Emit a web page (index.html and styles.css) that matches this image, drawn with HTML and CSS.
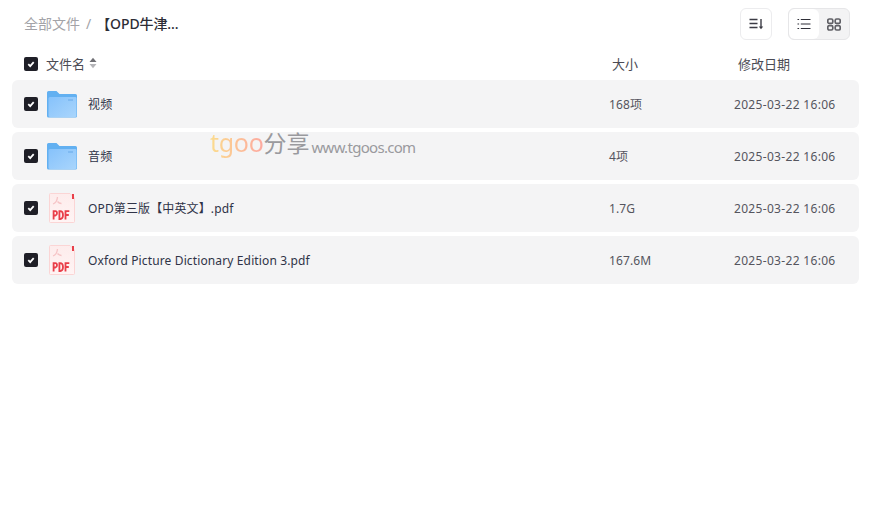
FILE: index.html
```html
<!DOCTYPE html>
<html lang="zh-CN">
<head>
<meta charset="utf-8">
<title>全部文件</title>
<link rel="stylesheet" href="styles.css">
</head>
<body>
<svg class="defs" width="0" height="0">
  <defs>
    <linearGradient id="folderFront" x1="0" y1="0" x2="1" y2="1"><stop offset="0" stop-color="#86c2fb"/><stop offset="1" stop-color="#a9d5fc"/></linearGradient>
    <linearGradient id="pdfPaper" x1="0" y1="0" x2="0" y2="1"><stop offset="0" stop-color="#fdecec"/><stop offset="1" stop-color="#fff4f4"/></linearGradient>
    <symbol id="folder" viewBox="0 0 30 28"><path d="M0 2.500Q0 1 1.500 1H9.500L12.500 4H28.500Q30 4 30 5.500V26Q30 27.500 28.500 27.500H1.500Q0 27.500 0 26z" fill="#62b0f1"/><path d="M1.500 8.500Q1.500 7 3 7H28.500Q29.500 7 29.500 8.500V25.500Q29.500 27 28 27H3Q1.500 27 1.500 25.500z" fill="url(#folderFront)"/><rect x="21" y="9" width="5" height="2" fill="#7fbaf2"/></symbol>
    <symbol id="pdf" viewBox="0 0 30 30"><path d="M3.500 .5H23L27.500 5V28.500Q27.500 29.500 26.500 29.500H3.500Q2.500 29.500 2.500 28.500V1.500Q2.500 .5 3.500 .5z" fill="url(#pdfPaper)" stroke="#fbd5d5"/><rect x="25" y="1" width="2" height="5" fill="#e8404a"/><path d="M6 11Q10 9.500 10.500 4M10.500 8.500Q12 10.500 14.500 10.500" stroke="#f6c4c6" stroke-width="1.300" fill="none"/><g fill="none" stroke="#e93e49" stroke-width="1.800"><path d="M6.600 26.500V18.200H8.300Q10 18.200 10 20.200T8.300 22.500H6.600"/><path d="M12.400 26V18.200H13.200Q16 18.200 16 22.100T13.200 26z"/><path d="M18.500 26.500V18.200H22.300M18.500 22H21.800"/></g></symbol>
    <symbol id="tick" viewBox="0 0 10 10"><path d="M2.300 5.200l1.900 1.900L7.700 3.200" stroke="#fff" stroke-width="1.800" fill="none"/></symbol>
  </defs>
</svg>
<div class="page">
  <header class="topbar">
    <nav class="crumbs">
      <span class="crumb-root">全部文件</span>
      <span class="crumb-sep">/</span>
      <span class="crumb-current">【OPD牛津...</span>
    </nav>
    <div class="tools">
      <button class="tool sort-btn">
        <svg width="16" height="16" viewBox="0 0 16 16"><path d="M1.500 3.500h8M1.500 7.500h8M1.500 11.500h8" stroke="#3b3b44" stroke-width="1.300" fill="none"/><path d="M13 3v8.500" stroke="#3b3b44" stroke-width="1.400" fill="none"/><path d="M10.800 10.600h4.400L13 13.200z" fill="#3b3b44"/></svg>
      </button>
      <div class="view-toggle">
        <button class="view active">
          <svg width="14" height="12" viewBox="0 0 14 12"><path d="M0.500 1.500h1.600M0.500 6h1.600M0.500 10.500h1.600M3.800 1.500h9.700M3.800 6h9.700M3.800 10.500h9.700" stroke="#2f2f38" stroke-width="1.200" fill="none"/></svg>
        </button>
        <button class="view">
          <svg width="14" height="13" viewBox="0 0 14 13"><g fill="none" stroke="#606066" stroke-width="1.700"><rect x="0.800" y="1" width="5" height="4.400" rx="1.400"/><rect x="8.200" y="1" width="5" height="4.400" rx="1.400"/><rect x="0.800" y="7.600" width="5" height="4.400" rx="1.400"/><rect x="8.200" y="7.600" width="5" height="4.400" rx="1.400"/></g></svg>
        </button>
      </div>
    </div>
  </header>

  <div class="head-row">
    <span class="check"><svg width="10" height="10"><use href="#tick"/></svg></span>
    <span class="head-name">文件名<svg class="sorter" width="8" height="12" viewBox="0 0 8 12"><path d="M4 .8L7.500 5H.5z" fill="#6f6f74"/><path d="M4 11.200L.5 7h7z" fill="#b4b4b8"/></svg></span>
    <span class="head-size">大小</span>
    <span class="head-date">修改日期</span>
  </div>

  <ul class="list">
    <li class="row">
      <span class="check"><svg width="10" height="10"><use href="#tick"/></svg></span>
      <svg class="icon" width="30" height="28"><use href="#folder"/></svg>
      <span class="name">视频</span><span class="size">168项</span><span class="date">2025-03-22 16:06</span>
    </li>
    <li class="row">
      <span class="check"><svg width="10" height="10"><use href="#tick"/></svg></span>
      <svg class="icon" width="30" height="28"><use href="#folder"/></svg>
      <span class="name">音频</span><span class="size">4项</span><span class="date">2025-03-22 16:06</span>
    </li>
    <li class="row">
      <span class="check"><svg width="10" height="10"><use href="#tick"/></svg></span>
      <svg class="icon" width="30" height="30"><use href="#pdf"/></svg>
      <span class="name">OPD第三版【中英文】.pdf</span><span class="size">1.7G</span><span class="date">2025-03-22 16:06</span>
    </li>
    <li class="row">
      <span class="check"><svg width="10" height="10"><use href="#tick"/></svg></span>
      <svg class="icon" width="30" height="30"><use href="#pdf"/></svg>
      <span class="name">Oxford Picture Dictionary Edition 3.pdf</span><span class="size">167.6M</span><span class="date">2025-03-22 16:06</span>
    </li>
  </ul>

  <div class="watermark"><span class="wm-brand">tgoo</span><span class="wm-cn">分享</span><span class="wm-url">www.tgoos.com</span></div>
</div>
</body>
</html>
```

FILE: styles.css
```css
* { box-sizing: border-box; }
html, body { margin: 0; padding: 0; background: #fff; }
body {
  font-family: "Noto Sans", "Noto Sans CJK SC", sans-serif;
  font-size: 12px;
  color: #3c3c44;
}
.defs { position: absolute; }
.page { position: relative; width: 874px; height: 514px; overflow: hidden; }
.topbar {
  display: flex;
  align-items: center;
  justify-content: space-between;
  height: 48px;
  padding: 0 24px;
}
.crumbs { display: flex; align-items: center; font-size: 14px; padding-bottom: 2px; }
.crumb-root { color: #a3a3a8; }
.crumb-sep { color: #a3a3a8; margin: 0 5px 0 6px; font-size: 14px; }
.crumb-current { color: #2d2d36; font-weight: 500; letter-spacing: -.1px; }
.tools { display: flex; align-items: center; gap: 16px; }
button { padding: 0; font: inherit; cursor: pointer; }
.tool {
  width: 32px; height: 32px;
  display: flex; align-items: center; justify-content: center;
  background: #fff;
  border: 1px solid #ececee;
  border-radius: 6px;
}
.view-toggle {
  display: flex;
  width: 62px; height: 32px;
  background: #f3f3f4;
  border: 1px solid #e6e6e8;
  border-radius: 6px;
  overflow: hidden;
}
.view {
  flex: 1;
  display: flex; align-items: center; justify-content: center;
  border: 0;
  background: transparent;
}
.view.active { background: #fff; border-radius: 6px; }
.head-row {
  display: flex;
  align-items: center;
  height: 32px;
  padding-left: 24px;
  font-size: 13px;
  color: #4b4b54;
}
.head-name, .head-size, .head-date { margin-bottom: 2px; }
.check {
  flex: none;
  width: 14px; height: 14px;
  display: flex; align-items: center; justify-content: center;
  background: #1f1f27;
  border-radius: 2px;
}
.head-name { display: flex; align-items: center; margin-left: 8px; width: 566px; }
.sorter { margin-left: 4px; }
.head-size { width: 126px; }
.list { list-style: none; margin: 0; padding: 0 15px 0 12px; display: flex; flex-direction: column; gap: 4px; }
.row {
  display: flex;
  align-items: center;
  height: 48px;
  padding-left: 12px;
  background: #f4f4f5;
  border-radius: 6px;
}
.icon { flex: none; margin-left: 9px; }
.name { margin-left: 11px; width: 521px; color: #2f3347; letter-spacing: .13px; white-space: nowrap; }
.size { width: 125px; color: #55555e; letter-spacing: .1px; }
.date { color: #55555e; letter-spacing: .32px; }
.watermark {
  position: absolute;
  left: 210px; top: 125px;
  display: flex;
  align-items: baseline;
  white-space: nowrap;
  color: #9a9a9e;
  font-family: "Noto Sans", "Noto Sans CJK SC", sans-serif;
}
.wm-brand {
  font-size: 25px;
  letter-spacing: -.3px;
  background: linear-gradient(90deg, #fbdc8e, #fda9a0);
  -webkit-background-clip: text;
  background-clip: text;
  color: transparent;
}
.wm-cn { font-size: 23px; }
.wm-url { font-size: 15px; margin-left: 2px; letter-spacing: -.7px; transform: translateY(1px); }
```
